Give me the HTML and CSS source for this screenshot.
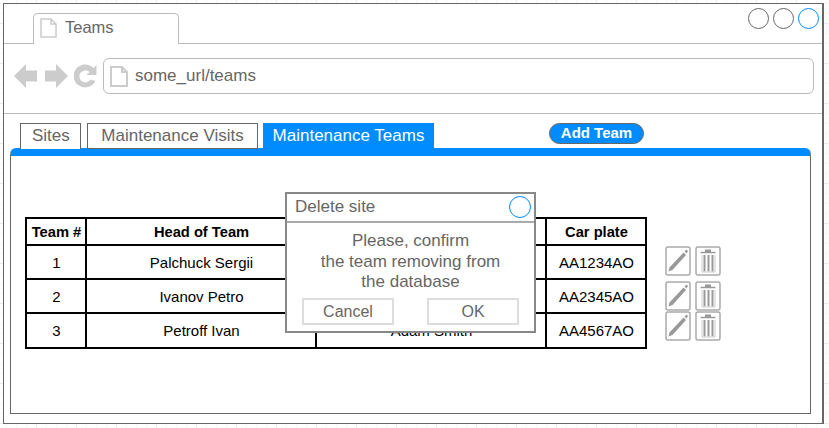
FILE: index.html
```html
<!DOCTYPE html>
<html lang="en">
<head>
<meta charset="UTF-8" />
<meta name="viewport" content="width=device-width, initial-scale=1.0" />
<title>Teams</title>
<link rel="stylesheet" href="styles.css">
</head>
<body>

<div class="browser">
  <div class="tab-bar">
    <div class="browser-tab">
      <svg class="page-icon" width="17" height="20" viewBox="0 0 17 20"><path d="M1 1H11L16 6V19H1Z M11 1V6H16" fill="#fff" stroke="#ccc" stroke-width="1.5"/></svg>
      <span>Teams</span>
    </div>
    <div class="win-controls">
      <span class="win-btn"></span>
      <span class="win-btn"></span>
      <span class="win-btn blue"></span>
    </div>
  </div>

  <div class="nav-bar">
    <div class="nav-icons">
      <svg width="24" height="26" viewBox="0 0 24 26"><path d="M0 13L12 1V7.500H23V18.500H12V25Z" fill="#ccc"/></svg>
      <svg width="24" height="26" viewBox="0 0 24 26"><path d="M24 13L12 1V7.500H1V18.500H12V25Z" fill="#ccc"/></svg>
      <svg width="23" height="24" viewBox="0 0 23 24"><path d="M16.500 15.500A6 6 0 1 1 15.500 8L12.500 11H22.500V1L19.500 4A11.500 11.500 0 1 0 21.500 17Z" fill="#ccc"/></svg>
    </div>
    <div class="address">
      <svg width="18" height="21" viewBox="0 0 18 21"><path d="M1 1H12L17 6V20H1Z M12 1V6H17" fill="#fff" stroke="#ccc" stroke-width="2"/></svg>
      <span>some_url/teams</span>
    </div>
  </div>

  <div class="content">
    <div class="tabs">
      <div class="tab">Sites</div>
      <div class="tab visits">Maintenance Visits</div>
      <div class="tab active">Maintenance Teams</div>
      <div class="add-team">Add Team</div>
    </div>

    <div class="panel">
      <table class="teams">
        <thead>
          <tr>
            <th class="col-num">Team #</th>
            <th class="col-head">Head of Team</th>
            <th class="col-driver"></th>
            <th class="col-plate">Car plate</th>
          </tr>
        </thead>
        <tbody>
          <tr><td>1</td><td>Palchuck Sergii</td><td></td><td>AA1234AO</td></tr>
          <tr><td>2</td><td>Ivanov Petro</td><td></td><td>AA2345AO</td></tr>
          <tr><td>3</td><td>Petroff Ivan</td><td>Adam Smith</td><td>AA4567AO</td></tr>
        </tbody>
      </table>

      <div class="actions">
        <div class="action-row">
          <span class="icon-btn"><svg width="26" height="30" viewBox="0 0 26 30"><use href="#pencil"/></svg></span>
          <span class="icon-btn"><svg width="26" height="30" viewBox="0 0 26 30"><use href="#trash"/></svg></span>
        </div>
        <div class="action-row second">
          <span class="icon-btn"><svg width="26" height="30" viewBox="0 0 26 30"><use href="#pencil"/></svg></span>
          <span class="icon-btn"><svg width="26" height="30" viewBox="0 0 26 30"><use href="#trash"/></svg></span>
        </div>
        <div class="action-row">
          <span class="icon-btn"><svg width="26" height="30" viewBox="0 0 26 30"><use href="#pencil"/></svg></span>
          <span class="icon-btn"><svg width="26" height="30" viewBox="0 0 26 30"><use href="#trash"/></svg></span>
        </div>
      </div>
    </div>
  </div>
</div>

<div class="dialog">
  <div class="dialog-title">
    <span>Delete site</span>
    <span class="dialog-close"></span>
  </div>
  <p class="dialog-text">Please, confirm<br>the team removing from<br>the database</p>
  <div class="dialog-buttons">
    <div class="dialog-btn">Cancel</div>
    <div class="dialog-btn">OK</div>
  </div>
</div>

<!-- shared icons -->
<svg class="defs" width="0" height="0">
  <defs>
    <g id="pencil">
      <rect x="1" y="1" width="24" height="28" rx="2" fill="#fff" stroke="#aaa" stroke-width="1.500"/>
      <path d="M3.500 25.500L4.500 21.500L18.500 6.500L21 9L7.500 24Z" fill="#999"/>
      <path d="M19.500 5.500L21.500 3.500L23 5L21.500 7.500Z" fill="#999"/>
    </g>
    <g id="trash">
      <rect x="1" y="1" width="24" height="28" rx="2" fill="#fff" stroke="#aaa" stroke-width="1.500"/>
      <path d="M5.500 6.500H20.500" stroke="#999" stroke-width="1.500"/>
      <path d="M10 6V3.500H16V6" fill="#999"/>
      <path d="M9.500 9V25.500M13.500 9V25.500M17.500 9V25.500" stroke="#999" stroke-width="2"/>
      <path d="M7 9V26H20V9" fill="none" stroke="#ccc"/>
    </g>
  </defs>
</svg>

</body>
</html>
```
FILE: styles.css
```css
* {
  box-sizing: border-box;
}

body {
  margin: 0;
  width: 829px;
  height: 428px;
  overflow: hidden;
  position: relative;
  font-family: "Liberation Sans", Arial, sans-serif;
  background-color: #fff;
  background-image:
    linear-gradient(to right, #ececec 1px, transparent 1px),
    linear-gradient(to bottom, #ececec 1px, transparent 1px),
    linear-gradient(to right, #f7f7f7 1px, transparent 1px),
    linear-gradient(to bottom, #f7f7f7 1px, transparent 1px);
  background-size: 40px 40px, 40px 40px, 10px 10px, 10px 10px;
  background-position: 36px 23px, 36px 23px, 6px 3px, 6px 3px;
}

.browser {
  margin: 3px 0 0 3px;
  width: 821px;
  height: 421px;
  background: #fff;
  border: 1px solid #666;
  border-right-width: 2px;
}

/* Browser chrome */
.tab-bar {
  height: 40px;
  border-bottom: 1px solid #bbb;
  display: flex;
  align-items: flex-end;
  justify-content: space-between;
  padding-left: 29px;
}

.browser-tab {
  width: 146px;
  height: 31px;
  margin-bottom: -1px;
  display: flex;
  align-items: center;
  gap: 8px;
  padding: 0 0 3px 6px;
  background: #fff;
  border: 1px solid #bbb;
  border-bottom: none;
  border-radius: 5px 5px 0 0;
  font-size: 16.500px;
  color: #666;
}

.win-controls {
  display: flex;
  gap: 4px;
  align-self: flex-start;
  margin: 4px 3px 0 0;
}

.win-btn {
  width: 21px;
  height: 21px;
  border: 1px solid #666;
  border-radius: 50%;
}

.win-btn.blue {
  border-color: #008cff;
}

.nav-bar {
  height: 70px;
  border-bottom: 1px solid #bbb;
  display: flex;
  align-items: center;
  padding: 0 8px 5px 10px;
}

.nav-icons {
  display: flex;
  align-items: center;
  gap: 6px;
  width: 89px;
}

.address {
  flex: 1;
  height: 36px;
  display: flex;
  align-items: center;
  gap: 7px;
  padding-left: 6px;
  border: 1px solid #bbb;
  border-radius: 6px;
  font-size: 17px;
  color: #666;
}

/* Page tabs */
.content {
  padding: 9px 11px 0 6px;
}

.tabs {
  display: flex;
  align-items: flex-start;
  height: 26px;
  padding-left: 10px;
  font-size: 17px;
  color: #666;
}

.tab {
  height: 26px;
  padding: 0 11px;
  line-height: 23px;
  background: #fff;
  border: 1px solid #666;
  border-bottom: none;
  margin-right: 6px;
  width: 61px;
  text-align: center;
}

.tab.visits {
  width: 171px;
  margin-right: 5px;
  border-bottom: 1px solid #666;
}

.tab.active {
  width: 171px;
  height: 25px;
  padding: 0;
  line-height: 25px;
  background: #008cff;
  border: none;
  color: #fff;
  margin-right: 0;
}

.add-team {
  width: 95px;
  height: 21px;
  margin-left: 115px;
  background: #008cff;
  border: 1px solid #666;
  border-radius: 11px;
  color: #fff;
  font-size: 15px;
  font-weight: bold;
  line-height: 17px;
  text-align: center;
}

.panel {
  height: 266px;
  margin-top: -1px;
  padding: 61px 0 0 14px;
  display: flex;
  align-items: flex-start;
  background: #fff;
  border: 1px solid #666;
  border-top: 8px solid #008cff;
  border-radius: 6px 6px 0 0;
}

/* Teams table */
.teams {
  width: 622px;
  table-layout: fixed;
  border-collapse: collapse;
  font-size: 15px;
  color: #000;
  text-align: center;
}

.teams th, .teams td {
  border: 2px solid #000;
  padding: 0 0 0 1px;
}

.teams th {
  font-size: 14.700px;
}

.teams thead tr {
  height: 27px;
}

.teams tbody tr {
  height: 34px;
}

.teams tbody tr:last-child {
  height: 35px;
}

.col-num {
  width: 60px;
}

.col-head, .col-driver {
  width: 230px;
}

.actions {
  margin: 29px 0 0 18px;
}

.action-row {
  display: flex;
  gap: 4px;
}

.action-row.second {
  margin-top: 5px;
}

.icon-btn {
  display: block;
  width: 26px;
  height: 30px;
}

.icon-btn svg {
  display: block;
}

.defs {
  position: absolute;
}

/* Confirm dialog, sits over the table */
.dialog {
  position: absolute;
  left: 285px;
  top: 192px;
  width: 251px;
  height: 141px;
  background: #fff;
  border: 2px solid #888;
  color: #666;
  font-size: 17px;
}

.dialog-title {
  height: 29px;
  display: flex;
  align-items: center;
  justify-content: space-between;
  padding: 0 3px 1px 8px;
  border-bottom: 2px solid #aaa;
}

.dialog-close {
  width: 22px;
  height: 22px;
  border: 1px solid #008cff;
  border-radius: 50%;
}

.dialog-text {
  margin: 8px 0 0;
  line-height: 20.500px;
  text-align: center;
}

.dialog-buttons {
  display: flex;
  justify-content: space-between;
  margin: 5px 15px 0;
}

.dialog-btn {
  width: 92px;
  height: 27px;
  border: 2px solid #ddd;
  font-size: 16px;
  line-height: 23px;
  text-align: center;
}
```
